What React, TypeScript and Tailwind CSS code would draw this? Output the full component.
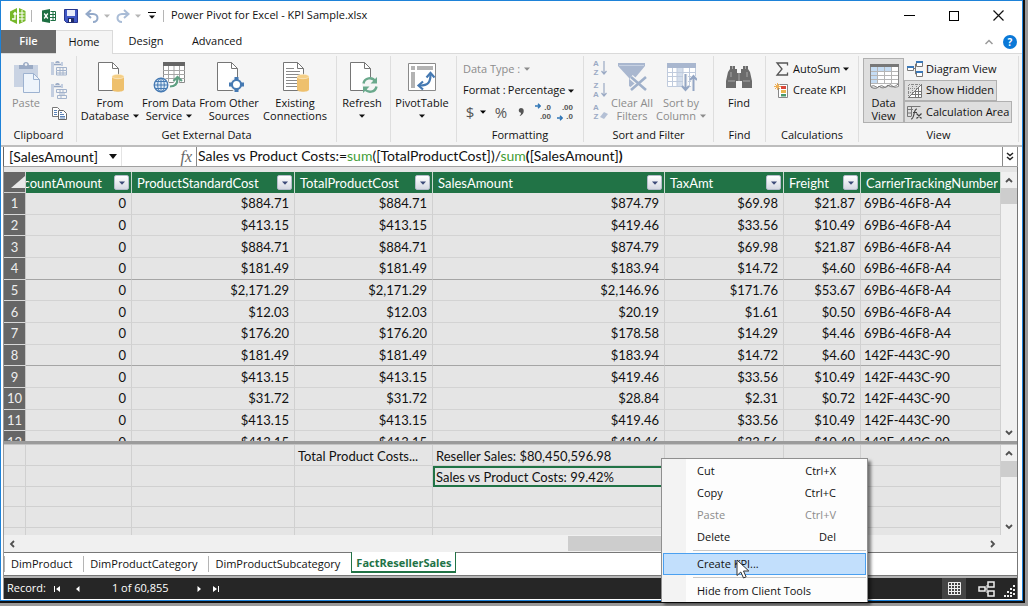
import type { ReactNode } from "react";

const columns = [
	{ name: "DiscountAmount", width: "w-[106px]" },
	{ name: "ProductStandardCost", width: "w-[163px]" },
	{ name: "TotalProductCost", width: "w-[138px]" },
	{ name: "SalesAmount", width: "w-[232px]" },
	{ name: "TaxAmt", width: "w-[119px]" },
	{ name: "Freight", width: "w-[77px]" },
	{ name: "CarrierTrackingNumber", width: "" },
];

const rows = [
	["0", "$884.71", "$884.71", "$874.79", "$69.98", "$21.87", "69B6-46F8-A4"],
	["0", "$413.15", "$413.15", "$419.46", "$33.56", "$10.49", "69B6-46F8-A4"],
	["0", "$884.71", "$884.71", "$874.79", "$69.98", "$21.87", "69B6-46F8-A4"],
	["0", "$181.49", "$181.49", "$183.94", "$14.72", "$4.60", "69B6-46F8-A4"],
	["0", "$2,171.29", "$2,171.29", "$2,146.96", "$171.76", "$53.67", "69B6-46F8-A4"],
	["0", "$12.03", "$12.03", "$20.19", "$1.61", "$0.50", "69B6-46F8-A4"],
	["0", "$176.20", "$176.20", "$178.58", "$14.29", "$4.46", "69B6-46F8-A4"],
	["0", "$181.49", "$181.49", "$183.94", "$14.72", "$4.60", "142F-443C-90"],
	["0", "$413.15", "$413.15", "$419.46", "$33.56", "$10.49", "142F-443C-90"],
	["0", "$31.72", "$31.72", "$28.84", "$2.31", "$0.72", "142F-443C-90"],
	["0", "$413.15", "$413.15", "$419.46", "$33.56", "$10.49", "142F-443C-90"],
	["0", "$413.15", "$413.15", "$419.46", "$33.56", "$10.49", "142F-443C-90"],
];

const measures = [
	["", "", "Total Product Costs...", "Reseller Sales: $80,450,596.98", "", "", ""],
	["", "", "", "Sales vs Product Costs: 99.42%", "", "", ""],
	["", "", "", "", "", "", ""],
	["", "", "", "", "", "", ""],
	["", "", "", "", "", "", ""],
];

const Caret = ({ className = "" }: { className?: string }) => (
	<svg viewBox="0 0 6 4" className={`inline-block h-1 w-[6px] shrink-0 ${className}`}>
		<path d="M0 .5h6L3 3.8z" fill="currentColor" />
	</svg>
);

const Icon = ({ size, children }: { size: "sm" | "lg"; children: ReactNode }) => (
	<svg
		viewBox={size === "lg" ? "0 0 32 32" : "0 0 16 16"}
		className={size === "lg" ? "h-8 w-8 shrink-0" : "h-4 w-4 shrink-0"}
		fill="none"
	>
		{children}
	</svg>
);

const PagePath = () => (
	<>
		<path d="M4.500 1.500h14l6 6v22h-20z" fill="#fff" stroke="#767676" />
		<path d="M18.500 1.500v6h6" stroke="#767676" />
	</>
);

const Cylinder = () => (
	<g fill="#eec06d">
		<path d="M18 15.500v13c0 3 12 3 12 0v-13z" />
		<ellipse cx="24" cy="15.500" rx="6" ry="2.200" fill="#f5cf86" stroke="#fdf3df" strokeWidth=".6" />
	</g>
);

const PasteIcon = () => (
	<Icon size="lg">
		<path d="M4 4h24v22H4z" fill="#c9d3e3" />
		<path d="M9 8V4h4c0-4 6-4 6 0h4v4z" fill="#9aaac4" />
		<circle cx="16" cy="3.500" r="1.300" fill="#f5f5f5" />
		<path d="M13.500 12.500h10l6 6v13h-16z" fill="#eef4fb" stroke="#9db2d0" />
		<path d="M23.500 12.500v6h6" stroke="#9db2d0" />
	</Icon>
);

const PasteSmall = ({ replace }: { replace?: boolean }) => (
	<Icon size="sm">
		<path d="M0 1h3v13H0zM10 1h2v4h-2z" fill="#c3cee0" />
		<path d="M3 3.500h7M5 2c0-1.500 3-1.500 3 0" stroke="#97a8c4" strokeWidth="1.600" />
		<path d="M5.500 6.500h10v3h-10zM9 6.500v3M12 6.500v3" stroke="#a3b3cc" />
		<path d={replace ? "M6.500 12.500h9v3h-9zM10 12v4M8 11h6" : "M5.500 10v4h10v-4M5 12h10M9 10v4M12 10v4"} stroke="#a3b3cc" />
	</Icon>
);

const CopyIcon = () => (
	<Icon size="sm">
		<path d="M1.500 2.500h5l2 2v7h-7z" fill="#fff" stroke="#777" />
		<path d="M3 5.500h3M3 7.500h3M3 9.500h3" stroke="#5b83b8" />
		<path d="M7.500 5.500h5l3 3v6h-8z" fill="#fff" stroke="#666" />
		<path d="M9 9.500h4M9 11.500h5M9 7.500h2M9 13h5" stroke="#5b83b8" />
	</Icon>
);

const DatabaseIcon = () => (
	<Icon size="lg">
		<PagePath />
		<Cylinder />
	</Icon>
);

const DataServiceIcon = () => (
	<Icon size="lg">
		<path d="M10.500 2.500h21v19h-21z" fill="#fff" stroke="#8a8a8a" />
		<path d="M10 1h22v4H10z" fill="#666" />
		<path d="M10 9.500h22M10 13.500h22M10 17.500h22M15.500 5v17M21 5v17M26.500 5v17" stroke="#a5a5a5" />
		<circle cx="8" cy="24" r="8" fill="#f5f5f5" />
		<circle cx="8" cy="24" r="6.800" fill="#dceaf7" stroke="#4579b2" strokeWidth="1.300" />
		<path d="M1 24h14M8 17v14M3 20.500h10M3 27.500h10" stroke="#4579b2" />
		<ellipse cx="8" cy="24" rx="3.300" ry="6.800" stroke="#4579b2" />
		<path d="M17 25c5 0 7-2 7-7" stroke="#fff" strokeWidth="4.500" />
		<path d="M17 25.500c5 0 7.500-2 7.500-8M20.500 20l4-4 4.500 4" stroke="#5fa083" strokeWidth="2.200" />
	</Icon>
);

const OtherSourcesIcon = () => (
	<Icon size="lg">
		<PagePath />
		<circle cx="23.500" cy="23.500" r="7" fill="#f5f5f5" />
		<circle cx="23.500" cy="23.500" r="4.500" fill="#fff" stroke="#4579b2" strokeWidth="2" />
		<path d="M21.500 16h4v3h-4zM21.500 28h4v3h-4zM16 21.500h3v4h-3zM28 21.500h3v4h-3z" fill="#4579b2" />
	</Icon>
);

const ConnectionsIcon = () => (
	<Icon size="lg">
		<PagePath />
		<path d="M7 7.500h8M7 10.500h14M7 13.500h14M7 16.500h11M7 19.500h11M7 22.500h11M7 25.500h11" stroke="#8a8a8a" />
		<Cylinder />
	</Icon>
);

const RefreshIcon = () => (
	<Icon size="lg">
		<PagePath />
		<circle cx="24" cy="24" r="8" fill="#f5f5f5" />
		<path d="M17.500 22.500c1-6 9-7 12-2M30.500 25.500c-1 6-9 7-12 2" stroke="#6aa98c" strokeWidth="2.400" />
		<path d="M31 16v6.500h-6.500zM17 32v-6.500h6.500z" fill="#6aa98c" />
	</Icon>
);

const PivotIcon = () => (
	<Icon size="lg">
		<path d="M2.500 2.500h27v27h-27z" fill="#fff" stroke="#8a8a8a" />
		<path d="M5 5h4v4H5zM11 5h16v4H11zM5 11h4v16H5z" fill="#b3b3b3" />
		<path d="M14 24.500c8 0 10.500-3 10.500-11" stroke="#4579b2" strokeWidth="2.200" />
		<path d="M20.500 16.500l4-4.500 4 4.500M17 20.500l-4.500 4 4.500 4" stroke="#4579b2" strokeWidth="2.200" />
	</Icon>
);

const FunnelIcon = () => (
	<Icon size="lg">
		<path d="M2 2h27v3L19 17v12l-6-4v-8L2 5z" fill="#a9b7cf" />
		<path d="M3 4.500h25" stroke="#c7d1e2" />
		<path d="M15 16l15 13M30 16L15 29" stroke="#f5f5f5" strokeWidth="5" />
		<path d="M15 16l15 13M30 16L15 29" stroke="#9fb0ca" strokeWidth="2.600" />
	</Icon>
);

const SortColumnIcon = () => (
	<Icon size="lg">
		<path d="M2.500 3.500h28v22h-28z" fill="#fff" stroke="#c0cbdd" />
		<path d="M2 2h29v5H2z" fill="#a9b7cf" />
		<path d="M12 7h6v18h-6z" fill="#d4deec" />
		<path d="M2 11.500h29M2 15.500h29M2 20.500h29M7.500 7v18M12 7v18M18 7v18M24.500 7v18" stroke="#c0cbdd" />
		<path d="M20.500 13v15M28.500 30V15" stroke="#f5f5f5" strokeWidth="5" />
		<path d="M20.500 13v15M17 25l3.500 4 3.500-4M28.500 30V15M25 19l3.500-4 3.500 4" stroke="#94a6c4" strokeWidth="2" />
	</Icon>
);

const BinocularsIcon = () => (
	<Icon size="lg">
		<path d="M7 5h5v3h2v4h4V8h2V5h5v3l2 3 2 9v7H19v-7h-6v7H3v-7l2-9 2-3z" fill="#6b6b6b" />
		<path d="M9.500 5v3M22.500 5v3M5 20h7M20 20h7M8 11v5M24 11v5M16 12v8" stroke="#a8a8a8" />
	</Icon>
);

const DataViewIcon = () => (
	<Icon size="lg">
		<path d="M2.500 3.500h28v22l-4 1-4-3-5 3-4-2-4 2-4-2-3 1z" fill="#fff" stroke="#8a8a8a" />
		<path d="M3 6h6v16H3zM9 6h14v4H9z" fill="#c5dcf3" />
		<path d="M2 3h29v3H2z" fill="#777" />
		<path d="M3 10.500h27M3 14.500h27M3 18.500h27M3 22.500h27M9.500 6v17M16.500 6v17M23.500 6v17" stroke="#b5b5b5" />
		<path d="M3 26c3 2 6 2 8-1 3 3 6 2 9-1 3 3 7 2 10-1" stroke="#777" />
	</Icon>
);

const SortGlyph = ({ top, bottom, eraser }: { top: string; bottom: string; eraser?: boolean }) => (
	<span className="flex h-[18px] items-center text-[#9baac4]">
		<span className="flex w-2 flex-col font-['Liberation_Sans',sans-serif] text-[8px] leading-[9px] font-bold">
			<span>{top}</span>
			<span>{bottom}</span>
		</span>
		<svg viewBox="0 0 8 16" className="h-4 w-2" fill="none">
			{eraser ? (
				<path d="M0 13l4-5 4 2-4 5z" fill="#b4c0d5" />
			) : (
				<path d="M4 1v13M1.500 11L4 14l2.500-3" stroke="#9baac4" strokeWidth="1.200" />
			)}
		</svg>
	</span>
);

const DecimalIcon = ({ top, bottom, decrease }: { top: string; bottom: string; decrease?: boolean }) => (
	<span className="relative flex h-[18px] w-4 flex-col items-end font-['Liberation_Sans',sans-serif] text-[8px] leading-[9px] font-bold text-[#555]">
		<span>{top}</span>
		<span>{bottom}</span>
		<svg viewBox="0 0 6 6" className={`absolute left-0 h-[6px] w-[6px] ${decrease ? "bottom-0" : "top-0"}`} fill="none">
			<path d="M0 3h5M3 .8L5.200 3 3 5.200" stroke="#2f75b5" strokeWidth="1.400" />
		</svg>
	</span>
);

const Group = ({ label, width, children }: { label?: string; width: string; children: ReactNode }) => (
	<section className={`flex h-[86px] shrink-0 flex-col border-r border-[#dedede] ${width}`}>
		<div className="flex flex-1 items-start">{children}</div>
		<p className="h-[14px] text-center leading-[14px]">{label}</p>
	</section>
);

type BigButtonProps = {
	icon: ReactNode;
	lines: string[];
	width: string;
	caret?: boolean;
	disabled?: boolean;
};

const BigButton = ({ icon, lines, width, caret, disabled }: BigButtonProps) => (
	<button
		type="button"
		disabled={disabled}
		className={`flex flex-col items-center pt-[5px] whitespace-nowrap leading-[13px] ${width} ${disabled ? "text-[#8c8c8c]" : ""}`}
	>
		{icon}
		<span className="mt-[3px]">{lines[0]}</span>
		<span className="flex h-[13px] items-center gap-1">
			{lines[1]}
			{caret && <Caret />}
		</span>
	</button>
);

const Arrow = ({ dir }: { dir: "up" | "down" | "left" | "right" }) => {
	const paths = {
		up: "M1 6l3-3 3 3",
		down: "M1 2l3 3 3-3",
		left: "M6 1L3 4l3 3",
		right: "M2 1l3 3-3 3",
	};
	return (
		<svg viewBox="0 0 8 8" className="h-2 w-2" fill="none">
			<path d={paths[dir]} stroke="#505050" strokeWidth="1.800" />
		</svg>
	);
};

const VerticalScroll = () => (
	<div className="flex w-4 shrink-0 flex-col bg-[#f0f0f0]">
		<button type="button" aria-label="Scroll up" className="flex h-4 items-center justify-center">
			<Arrow dir="up" />
		</button>
		<div className="h-4 bg-[#cdcdcd]" />
		<div className="flex-1" />
		<button type="button" aria-label="Scroll down" className="flex h-4 items-center justify-center">
			<Arrow dir="down" />
		</button>
	</div>
);

const ColumnWidths = () => (
	<colgroup>
		<col className="w-[22px]" />
		{columns.map((column) => (
			<col key={column.name} className={column.width} />
		))}
	</colgroup>
);

const TitleBar = () => (
	<header className="flex h-[29px] items-center pl-2">
		<svg viewBox="0 0 18 18" className="h-[18px] w-[18px]" fill="none">
			<path d="M8 1L1 4.500v9L8 17zM10 1l6.500 3v10L10 17z" fill="#76b82a" />
			<path d="M3 12h3V6M4.500 7.500L6 5.500l1.500 2" stroke="#fff" strokeWidth="1.300" />
			<path d="M10 6h5.500M10 9h5.500M10 12h5.500M13 3v12" stroke="#fff" />
		</svg>
		<span className="ml-1 h-3 w-px bg-[#b5b5b5]" />
		<svg viewBox="0 0 14 14" className="ml-[10px] h-[14px] w-[14px]" fill="none">
			<path d="M0 1.500L8 0v14l-8-1.500z" fill="#1d6f42" />
			<path d="M8.500 2.500h5v9h-5" fill="#fff" stroke="#1d6f42" />
			<path d="M8 5.500h6M8 8.500h6M11 2v10" stroke="#1d6f42" />
			<path d="M2.200 4.500l3.600 5M5.800 4.500l-3.600 5" stroke="#fff" strokeWidth="1.300" />
		</svg>
		<button type="button" aria-label="Save" className="ml-2">
			<svg viewBox="0 0 14 14" className="h-[14px] w-[14px]" fill="none">
				<path d="M.5.500h13v13h-11l-2-2z" fill="#3f57c4" stroke="#26348c" />
				<path d="M3 1h8v6H3z" fill="#e8ecfa" />
				<path d="M4 9h6v4.500H4z" fill="#1f2a66" />
				<path d="M5 10h2v3H5z" fill="#fff" />
			</svg>
		</button>
		<button type="button" aria-label="Undo" className="ml-[7px] flex items-center gap-[5px] text-[#b5b5b5]">
			<svg viewBox="0 0 14 14" className="h-[14px] w-[14px]" fill="none">
				<path d="M6 1L1.500 5 6 9M2 5h6c6 0 6 8 0 8" stroke="#93a9c9" strokeWidth="2" />
			</svg>
			<Caret />
		</button>
		<button type="button" aria-label="Redo" className="ml-[6px] flex items-center gap-[5px] text-[#b5b5b5]">
			<svg viewBox="0 0 14 14" className="h-[14px] w-[14px]" fill="none">
				<path d="M8 1l4.500 4L8 9M12 5H6c-6 0-6 8 0 8" stroke="#a9bcd6" strokeWidth="2" />
			</svg>
			<Caret />
		</button>
		<button type="button" aria-label="Customize Quick Access Toolbar" className="ml-[7px] flex flex-col items-center gap-[2px]">
			<span className="h-px w-2 bg-black" />
			<Caret />
		</button>
		<span className="ml-[7px] h-3 w-px bg-[#b5b5b5]" />
		<h1 className="ml-[7px] text-[11px]">Power Pivot for Excel - KPI Sample.xlsx</h1>
		<div className="ml-auto flex items-center gap-[34px] pr-[18px]">
			<button type="button" aria-label="Minimize" className="flex h-3 w-[11px] items-center">
				<span className="h-px w-full bg-black" />
			</button>
			<button type="button" aria-label="Maximize" className="h-[10px] w-[10px] border border-black" />
			<button type="button" aria-label="Close">
				<svg viewBox="0 0 11 11" className="h-[11px] w-[11px]" fill="none">
					<path d="M.5.500l10 10M10.500.500l-10 10" stroke="#111" strokeWidth="1.200" />
				</svg>
			</button>
		</div>
	</header>
);

const RibbonTabs = () => (
	<nav className="flex h-[23px] items-stretch text-center">
		<button type="button" className="w-[55px] bg-[#6a6a6a] font-semibold text-white">
			File
		</button>
		<button type="button" className="relative z-10 -mb-px w-[57px] border-t border-r border-[#dadada] bg-[#f5f5f5]">
			Home
		</button>
		<button type="button" className="w-[66px]">
			Design
		</button>
		<button type="button" className="w-[76px]">
			Advanced
		</button>
		<div className="ml-auto flex items-center gap-[10px] pr-[5px]">
			<button type="button" aria-label="Collapse ribbon">
				<svg viewBox="0 0 8 6" className="h-[6px] w-2" fill="none">
					<path d="M.5 5L4 1.500 7.500 5" stroke="#9a9a9a" strokeWidth="1.500" />
				</svg>
			</button>
			<button
				type="button"
				aria-label="Help"
				className="flex h-[14px] w-[14px] items-center justify-center rounded-full bg-[#0a78d7] text-[10px] leading-none font-bold text-white"
			>
				?
			</button>
		</div>
	</nav>
);

const Ribbon = () => (
	<div className="flex overflow-hidden border-t border-[#dadada] bg-[#f5f5f5] pt-[2px] pb-[3px]">
		<Group label="Clipboard" width="w-[76px]">
			<BigButton icon={<PasteIcon />} lines={["Paste"]} width="w-[50px]" disabled />
			<div className="flex flex-col gap-[6px] pt-[5px]">
				<button type="button" aria-label="Paste Append" disabled>
					<PasteSmall />
				</button>
				<button type="button" aria-label="Paste Replace" disabled>
					<PasteSmall replace />
				</button>
				<button type="button" aria-label="Copy">
					<CopyIcon />
				</button>
			</div>
		</Group>
		<Group label="Get External Data" width="w-[260px]">
			<BigButton icon={<DatabaseIcon />} lines={["From", "Database"]} width="w-[66px]" caret />
			<BigButton icon={<DataServiceIcon />} lines={["From Data", "Service"]} width="w-[52px]" caret />
			<BigButton icon={<OtherSourcesIcon />} lines={["From Other", "Sources"]} width="w-[68px]" />
			<BigButton icon={<ConnectionsIcon />} lines={["Existing", "Connections"]} width="w-[64px]" />
		</Group>
		<Group width="w-[54px]">
			<BigButton icon={<RefreshIcon />} lines={["Refresh"]} width="w-[50px]" caret />
		</Group>
		<Group width="w-[66px]">
			<BigButton icon={<PivotIcon />} lines={["PivotTable"]} width="w-[62px]" caret />
		</Group>
		<Group label="Formatting" width="w-[127px]">
			<div className="flex flex-col pt-[2px] pl-[6px]">
				<button type="button" disabled className="flex h-[22px] items-center gap-1 text-[#8c8c8c]">
					Data Type : <Caret />
				</button>
				<div className="flex h-[21px] items-center">
					<label htmlFor="format">Format :</label>
					<select id="format" className="ml-[2px] w-[60px] appearance-none bg-transparent">
						<option>Percentage</option>
					</select>
					<Caret />
				</div>
				<div className="flex h-[22px] items-center text-[15px] leading-none text-[#555]">
					<button type="button" aria-label="Accounting format" className="flex w-[26px] items-center justify-around">
						$ <Caret className="text-black" />
					</button>
					<button type="button" aria-label="Percent style" className="w-6">
						%
					</button>
					<button type="button" aria-label="Thousands separator" className="w-4">
						<svg viewBox="0 0 6 8" className="mx-auto h-2 w-[6px]">
							<path d="M3 0c3 0 3 3 2.500 4.500S3 8 1.500 8C3 6.500 3 5.500 3 4.800 0 4.800 0 0 3 0z" fill="#555" />
						</svg>
					</button>
					<button type="button" aria-label="Increase decimals" className="ml-[6px]">
						<DecimalIcon top=".0" bottom=".00" />
					</button>
					<button type="button" aria-label="Decrease decimals" className="ml-[6px]">
						<DecimalIcon top=".00" bottom=".0" decrease />
					</button>
				</div>
			</div>
		</Group>
		<Group label="Sort and Filter" width="w-[130px]">
			<div className="flex flex-col gap-1 pt-[3px] pl-2">
				<button type="button" aria-label="Sort A to Z" disabled>
					<SortGlyph top="A" bottom="Z" />
				</button>
				<button type="button" aria-label="Sort Z to A" disabled>
					<SortGlyph top="Z" bottom="A" />
				</button>
				<button type="button" aria-label="Clear sort" disabled>
					<SortGlyph top="A" bottom="Z" eraser />
				</button>
			</div>
			<BigButton icon={<FunnelIcon />} lines={["Clear All", "Filters"]} width="w-12" disabled />
			<BigButton icon={<SortColumnIcon />} lines={["Sort by", "Column"]} width="w-[50px]" disabled caret />
		</Group>
		<Group label="Find" width="w-[52px]">
			<BigButton icon={<BinocularsIcon />} lines={["Find"]} width="w-[50px]" />
		</Group>
		<Group label="Calculations" width="w-[93px]">
			<div className="flex flex-col pt-[2px] pl-2">
				<button type="button" className="flex h-[22px] items-center gap-[3px]">
					<Icon size="sm">
						<path d="M13.500 4.500v-2.500h-10.500l5 6-5 6h10.500v-2.500" stroke="#555" strokeWidth="1.300" />
					</Icon>
					AutoSum <Caret />
				</button>
				<button type="button" className="flex h-[21px] items-center gap-[3px]">
					<Icon size="sm">
						<path d="M4.500 1.500h9v13h-9z" fill="#fff" stroke="#888" />
						<path d="M7 3h5v3H7z" fill="#d9473a" />
						<path d="M7 7h5v3H7z" fill="#eab54d" />
						<path d="M7 11h5v2.500H7z" fill="#4a9a6c" />
						<path d="M3.500 0v7M0 3.500h7M1 1l5 5M6 1L1 6" stroke="#f0b055" />
					</Icon>
					Create KPI
				</button>
			</div>
		</Group>
		<Group label="View" width="w-[160px]">
			<div className="mt-[2px] ml-1 flex h-[65px]">
				<button type="button" className="flex w-[41px] flex-col items-center border border-[#b0b0b0] bg-[#dedede] pt-[2px] leading-[13px]">
					<DataViewIcon />
					<span className="mt-[3px]">Data</span>
					<span>View</span>
				</button>
				<div className="flex flex-col items-start whitespace-nowrap">
					<button type="button" className="flex flex-1 items-center gap-[3px] border border-transparent px-[2px]">
						<Icon size="sm">
							<path d="M.5 5.500h6v4h-6zM9.500.500h6v5h-6zM9.500 10.500h6v5h-6z" fill="#fff" stroke="#777" />
							<path d="M0 5h7v2H0zM9 0h7v2H9zM9 10h7v2H9z" fill="#3b78b8" />
							<path d="M7 7.500h1.500M8.500 3v10h1M8.500 3h1" stroke="#777" />
						</Icon>
						Diagram View
					</button>
					<button type="button" className="flex flex-1 items-center gap-[3px] border border-[#b0b0b0] bg-[#dedede] px-[2px]">
						<Icon size="sm">
							<path d="M1.500 15V1.500H15M5.500 1v11M9.500 1v7M1 5.500h9M1 9.500h6" stroke="#888" strokeDasharray="1 1" />
							<path d="M14.500 2v12.500H2z" fill="#fff" />
							<path d="M14.500 1.500l-13 13h13zM5 11.500h10M8 8.500h7M11.500 5v10M8.500 8v7" stroke="#777" />
						</Icon>
						Show Hidden
					</button>
					<button type="button" className="flex flex-1 items-center gap-[3px] border border-[#b0b0b0] bg-[#dedede] px-[2px]">
						<Icon size="sm">
							<path d="M.5 2.500h13M.5 2.500v10h4M1 5.500h5M1 9h3M4.500 2v10" stroke="#777" />
							<path d="M4 15c4 0 2-10 6-10M6 8.500h4M9.500 9.500l5 5M14.500 9.500l-5 5" stroke="#444" strokeWidth="1.200" />
						</Icon>
						Calculation Area
					</button>
				</div>
			</div>
		</Group>
	</div>
);

const FormulaBar = () => (
	<div className="flex h-5 items-center border-b border-l border-b-[#a0a0a0] border-l-[#666] bg-white font-[Lato,'Noto_Sans',sans-serif] text-[14px]">
		<div className="flex h-full w-[118px] items-center border-r border-[#e4e4e4] pl-[5px]">
			<select aria-label="Column" className="w-[100px] appearance-none bg-transparent leading-[18px]">
				<option>[SalesAmount]</option>
			</select>
			<svg viewBox="0 0 8 5" className="h-[5px] w-2">
				<path d="M0 0h8L4 5z" fill="#111" />
			</svg>
		</div>
		<span className="w-[74px] pr-1 text-right font-['Liberation_Serif',serif] text-[16px] leading-none text-[#666] italic">fx</span>
		<div
			contentEditable
			suppressContentEditableWarning
			role="textbox"
			aria-label="Formula"
			className="h-full flex-1 border-l border-[#888] pl-px leading-[18px] whitespace-nowrap outline-none"
		>
			Sales vs Product Costs:=<span className="text-[#3f9c35]">sum</span>([TotalProductCost])/
			<span className="text-[#3f9c35]">sum</span>
			<b>(</b>[SalesAmount]<b>)</b>
		</div>
		<button type="button" aria-label="Expand formula bar" className="flex h-full w-4 items-center justify-center border-x border-[#888]">
			<svg viewBox="0 0 8 9" className="h-[9px] w-2" fill="none">
				<path d="M1 1l3 2.500L7 1M1 5l3 2.500L7 5" stroke="#222" strokeWidth="1.500" />
			</svg>
		</button>
	</div>
);

const DataGrid = () => (
	<div className="flex h-[269px]">
		<div className="min-w-0 flex-1 overflow-hidden">
			<table className="h-[281px] w-full table-fixed border-separate border-spacing-0">
				<ColumnWidths />
				<thead>
					<tr className="h-[21px] bg-[#217346] text-left text-white">
						<th aria-label="Select all" className="border-r border-b border-[#d0d0d0] bg-[#666] p-0">
							<svg viewBox="0 0 14 12" className="ml-auto h-3 w-[14px]">
								<path d="M14 0v12H0z" fill="#e9e9e9" />
							</svg>
						</th>
						{columns.map((column, index) => (
							<th key={column.name} className="overflow-hidden border-r border-[#c9d8cf] p-0 font-normal">
								<div className="flex h-5 items-center pr-[2px]">
									<span className={`flex min-w-0 flex-1 overflow-hidden ${index === 0 ? "justify-end pr-3" : "pl-[5px]"}`}>
										{column.name}
									</span>
									{index < 6 && (
										<button
											type="button"
											aria-label={`Filter ${column.name}`}
											className="flex h-[15px] w-[15px] shrink-0 items-center justify-center rounded-xs border border-[#b4bccb] bg-linear-to-b from-white to-[#d5d9e3] text-[#3c4a78]"
										>
											<Caret />
										</button>
									)}
								</div>
							</th>
						))}
					</tr>
				</thead>
				<tbody className="leading-[19px]">
					{rows.map((row, index) => (
						<tr key={index}>
							<th className="border-r border-b border-r-[#c4c4c4] border-b-[#d8d8d8] bg-[#666] p-0 pt-px font-normal text-[#eee]">
								{index + 1}
							</th>
							{row.map((value, cell) => (
								<td
									key={cell}
									className={`border-r border-b border-r-[#d0d0d0] p-0 pt-px ${index % 4 === 3 ? "border-b-[#a5a5a5]" : "border-b-[#d3d3d3]"} ${cell === 6 ? "pl-[3px]" : "pr-[5px] text-right"}`}
								>
									{value}
								</td>
							))}
						</tr>
					))}
				</tbody>
			</table>
		</div>
		<VerticalScroll />
	</div>
);

const CalculationArea = () => (
	<div className="flex h-[90px]">
		<div className="min-w-0 flex-1 overflow-hidden">
			<table className="h-[104px] w-full table-fixed border-separate border-spacing-0 leading-4">
				<ColumnWidths />
				<tbody>
					{measures.map((row, index) => (
						<tr key={index} className="h-5">
							<th className="border-r border-b border-[#d0d0d0] p-0" />
							{row.map((value, cell) => (
								<td
									key={cell}
									className={`overflow-hidden border-r border-b border-[#d0d0d0] p-0 pt-[3px] pl-[3px] whitespace-nowrap ${index === 1 && cell === 3 ? "outline-2 -outline-offset-2 outline-[#217346]" : ""}`}
								>
									{value}
								</td>
							))}
						</tr>
					))}
				</tbody>
			</table>
		</div>
		<VerticalScroll />
	</div>
);

const HorizontalScroll = () => (
	<div className="flex h-[17px] items-center bg-[#f0f0f0] pr-4">
		<button type="button" aria-label="Scroll left" className="flex h-full w-4 items-center justify-center">
			<Arrow dir="left" />
		</button>
		<div className="h-[15px] flex-1 pl-[55%]">
			<div className="h-full w-[55%] bg-[#cdcdcd]" />
		</div>
		<button type="button" aria-label="Scroll right" className="flex h-full w-4 items-center justify-center">
			<Arrow dir="right" />
		</button>
	</div>
);

const SheetTabs = () => (
	<nav className="flex h-[23px] items-start border-t border-[#777] bg-white">
		{["DimProduct", "DimProductCategory", "DimProductSubcategory"].map((name) => (
			<button key={name} type="button" className="mt-[3px] h-4 border-l border-[#b5b5b5] pr-[11px] pl-[6px] leading-4">
				{name}
			</button>
		))}
		<button type="button" className="-mt-px h-[21px] border-x border-b-2 border-[#217346] bg-white px-1 pt-[3px] leading-4 font-bold text-[#217346]">
			FactResellerSales
		</button>
	</nav>
);

const StatusBar = () => (
	<footer className="flex h-[21px] items-center bg-[#262626] pl-[3px] text-white">
		<span>Record:</span>
		<button type="button" aria-label="First record" className="ml-2">
			<svg viewBox="0 0 6 6" className="h-[6px] w-[6px]">
				<path d="M0 0h1v6H0zM6 0v6L2 3z" fill="#fff" />
			</svg>
		</button>
		<button type="button" aria-label="Previous record" className="ml-4">
			<svg viewBox="0 0 4 6" className="h-[6px] w-1">
				<path d="M3.500 0v6L0 3z" fill="#fff" />
			</svg>
		</button>
		<span className="mr-7 ml-8">1 of 60,855</span>
		<button type="button" aria-label="Next record">
			<svg viewBox="0 0 4 6" className="h-[6px] w-1">
				<path d="M.5 0v6L4 3z" fill="#fff" />
			</svg>
		</button>
		<button type="button" aria-label="Last record" className="ml-3">
			<svg viewBox="0 0 6 6" className="h-[6px] w-[6px]">
				<path d="M5 0h1v6H5zM0 0v6l4-3z" fill="#fff" />
			</svg>
		</button>
		<div className="ml-auto flex h-full items-center">
			<button type="button" aria-label="Grid view" className="flex h-full w-6 items-center justify-center bg-[#444]">
				<svg viewBox="0 0 13 13" className="h-[13px] w-[13px]" fill="none">
					<path d="M.5.500h12v12H.500zM3.500 0v13M6.500 0v13M9.500 0v13M0 3.500h13M0 6.500h13M0 9.500h13" stroke="#eee" />
				</svg>
			</button>
			<button type="button" aria-label="Diagram view" className="ml-3">
				<svg viewBox="0 0 17 16" className="h-4 w-[17px]" fill="none">
					<path d="M1 6h6v4H1zM10 1h6v5h-6zM10 10h6v5h-6z" stroke="#eee" strokeWidth="1.500" />
					<path d="M7 8h2M9 4v8" stroke="#eee" />
				</svg>
			</button>
			<svg viewBox="0 0 12 12" className="mt-1 mr-px ml-[9px] h-3 w-3" fill="#eee">
				<path d="M9 0h2v2H9zM6 3h2v2H6zM9 4h2v2H9zM3 6h2v2H3zM6 7h2v2H6zM9 8h2v2H9zM0 10h2v2H0zM3 10h2v2H3zM6 10h2v2H6z" />
			</svg>
		</div>
	</footer>
);

const MenuItem = ({ label, shortcut, disabled, active }: { label: string; shortcut?: string; disabled?: boolean; active?: boolean }) => (
	<li>
		<button
			type="button"
			disabled={disabled}
			className={`flex h-[22px] w-full items-center justify-between border pr-[29px] pl-[33px] ${active ? "border-[#4ba0f0] bg-[#c2dffc]" : "border-transparent"} ${disabled ? "text-[#8c8c8c]" : ""}`}
		>
			<span>{label}</span>
			<span>{shortcut}</span>
		</button>
	</li>
);

const ContextMenu = () => (
	<ul className="absolute top-[458px] left-[661px] w-[207px] border border-b-0 border-[#8f8f8f] bg-[linear-gradient(to_right,#f3f3f3_24px,#fdfdfd_24px)] px-px pt-px shadow-[3px_3px_3px_rgba(0,0,0,0.5)]">
		<MenuItem label="Cut" shortcut="Ctrl+X" />
		<MenuItem label="Copy" shortcut="Ctrl+C" />
		<MenuItem label="Paste" shortcut="Ctrl+V" disabled />
		<MenuItem label="Delete" shortcut="Del" />
		<li className="my-[2px] ml-[30px] h-px bg-[#c8c8c8]" />
		<MenuItem label="Create KPI..." active />
		<li className="my-[2px] ml-[30px] h-px bg-[#c8c8c8]" />
		<MenuItem label="Hide from Client Tools" />
	</ul>
);

const App = () => {
	return (
		<main className="relative overflow-hidden bg-[#9a9a9a] pr-[3px] pb-1 font-['Open_Sans','Noto_Sans',sans-serif] text-[11px] text-[#111]">
			<div className="bg-[#111] pr-[2px] pb-[2px]">
				<div className="border border-[#1e82d8] bg-white">
					<TitleBar />
					<RibbonTabs />
					<Ribbon />
					<div className="border-t-2 border-[#bdbdbd] pr-1 pl-[2px]">
						<FormulaBar />
						<div className="border-r border-l border-r-[#777] border-l-[#999] bg-[#e5e5e5] pt-[5px]">
							<div className="font-[Lato,'Noto_Sans',sans-serif] text-[13px] leading-5">
								<DataGrid />
								<div className="h-1 border-b border-[#c4c4c4] bg-[#9b9b9b]" />
								<CalculationArea />
							</div>
							<HorizontalScroll />
							<SheetTabs />
							<div className="h-[3px] border-t border-[#777] bg-[#b5b5b5]" />
							<StatusBar />
						</div>
						<div className="h-px" />
					</div>
				</div>
			</div>
			<ContextMenu />
			<svg viewBox="0 0 14 20" className="absolute top-[559px] left-[736px] h-5 w-[14px]">
				<path d="M1 1v15.500l3.800-3.500 2.700 6 2.600-1.200-2.600-5.800h5.300z" fill="#fff" stroke="#333" />
			</svg>
		</main>
	);
};

export default App;
